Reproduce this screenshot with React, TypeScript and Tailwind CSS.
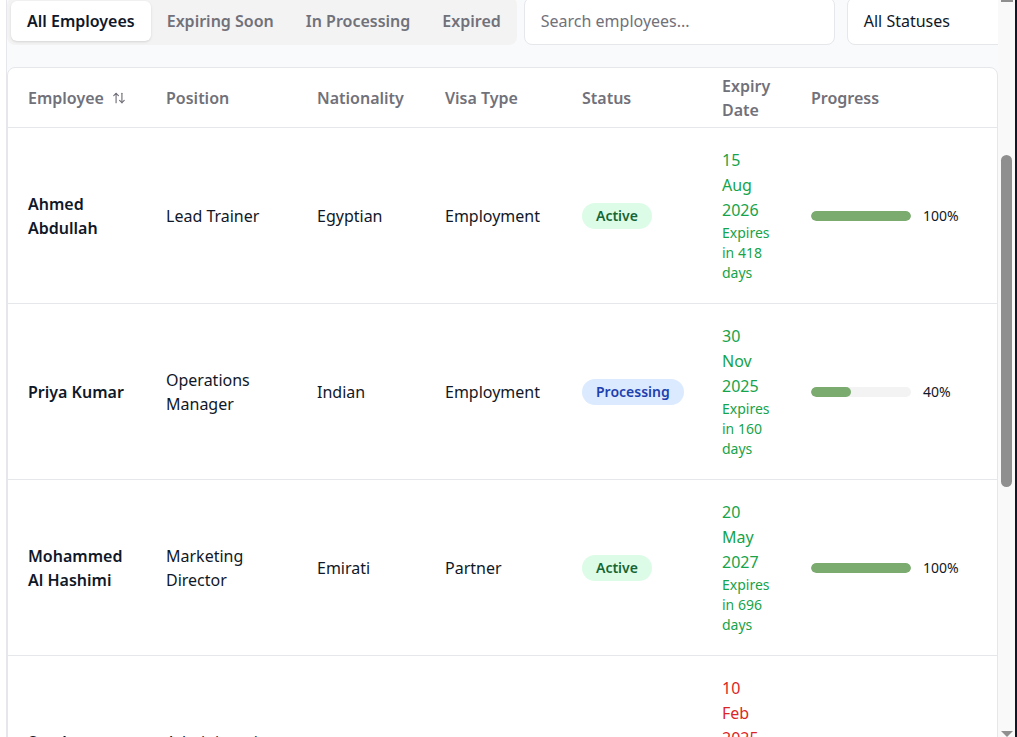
import React, { useEffect, useRef } from "react";
import { ArrowUpDown } from "lucide-react";

type Status = "Active" | "Processing" | "Expired";

type Employee = {
  name: string;
  position: string;
  nationality: string;
  visaType: string;
  status: Status;
  expiry: string;
  note: string;
  expired?: boolean;
  progress: number;
};

const employees: Employee[] = [
  {
    name: "Ahmed Abdullah",
    position: "Lead Trainer",
    nationality: "Egyptian",
    visaType: "Employment",
    status: "Active",
    expiry: "15 Aug 2026",
    note: "Expires in 418 days",
    progress: 100,
  },
  {
    name: "Priya Kumar",
    position: "Operations Manager",
    nationality: "Indian",
    visaType: "Employment",
    status: "Processing",
    expiry: "30 Nov 2025",
    note: "Expires in 160 days",
    progress: 40,
  },
  {
    name: "Mohammed Al Hashimi",
    position: "Marketing Director",
    nationality: "Emirati",
    visaType: "Partner",
    status: "Active",
    expiry: "20 May 2027",
    note: "Expires in 696 days",
    progress: 100,
  },
  {
    name: "Sarah Johnson",
    position: "Administrative Assistant",
    nationality: "British",
    visaType: "Employment",
    status: "Expired",
    expiry: "10 Feb 2025",
    note: "Expired 133 days ago",
    expired: true,
    progress: 0,
  },
  {
    name: "Fatima Hassan",
    position: "HR Specialist",
    nationality: "Jordanian",
    visaType: "Employment",
    status: "Active",
    expiry: "05 Jan 2027",
    note: "Expires in 561 days",
    progress: 100,
  },
  {
    name: "Daniel Costa",
    position: "Finance Analyst",
    nationality: "Portuguese",
    visaType: "Employment",
    status: "Processing",
    expiry: "12 Sep 2025",
    note: "Expires in 81 days",
    progress: 70,
  },
];

const badgeClass: Record<Status, string> = {
  Active: "bg-[#dcfce7] text-[#166534]",
  Processing: "bg-[#dbeafe] text-[#1e40af]",
  Expired: "bg-[#fee2e2] text-[#991b1b]",
};

const tabs = ["All Employees", "Expiring Soon", "In Processing", "Expired"];

const StatCard = ({ label, value }: { label: string; value: string }) => (
  <div className="flex flex-col gap-1 rounded-lg border border-gray-200 bg-white p-5">
    <span className="text-sm text-gray-500">{label}</span>
    <span className="text-2xl font-semibold text-gray-900">{value}</span>
  </div>
);

// classic scrollbar of the page, drawn since the screenshot browser hides real ones
const Scrollbar = () => (
  <div className="flex w-[17px] shrink-0 flex-col items-center bg-[#f9f9f9]">
    <div className="h-[2px] w-[12px] bg-[#8f8f8f]" />
    <div className="mt-[153px] h-[332px] w-[11px] rounded-full bg-[#8f8f8f]" />
    <div className="mt-auto h-0 w-0 border-x-[6px] border-t-[6px] border-x-transparent border-t-[#8f8f8f]" />
  </div>
);

export default function App() {
  const scrollRef = useRef<HTMLDivElement>(null);
  const toolbarRef = useRef<HTMLDivElement>(null);

  useEffect(() => {
    const box = scrollRef.current;
    const bar = toolbarRef.current;
    if (box && bar) {
      box.scrollTop = bar.offsetTop + 3;
    }
  }, []);

  return (
    <div
      className="flex h-[737px] w-[1017px] overflow-hidden bg-white text-gray-900"
      style={{ fontFamily: '"Segoe UI", "Noto Sans", sans-serif' }}
    >
      <div className="w-[7px] shrink-0 border-r border-gray-200 bg-white" />
      <div ref={scrollRef} className="relative flex-1 overflow-hidden bg-[#f9fafb]">
        <div className="flex h-[341px] flex-col gap-6 px-4 pt-6">
          <div className="flex flex-col gap-1">
            <h1 className="text-2xl font-semibold">Employee Visa Tracking</h1>
            <p className="text-base text-gray-500">
              Monitor visa status, renewals and expiry dates for all staff.
            </p>
          </div>
          <div className="grid grid-cols-4 gap-4">
            <StatCard label="Total Employees" value="24" />
            <StatCard label="Active Visas" value="18" />
            <StatCard label="In Processing" value="3" />
            <StatCard label="Expired" value="3" />
          </div>
        </div>

        <div ref={toolbarRef} className="flex items-center gap-[7px]">
          <div className="flex h-12 shrink-0 items-center rounded-lg bg-[#f3f3f3] py-1 pl-1">
            {tabs.map((t, i) => (
              <button
                key={t}
                className={
                  i === 0
                    ? "h-10 rounded-md bg-white px-4 text-base font-semibold text-gray-900 shadow-sm"
                    : "h-10 rounded-md px-4 text-base font-semibold text-[#71717a]"
                }
              >
                {t}
              </button>
            ))}
          </div>
          <div className="flex items-center gap-3">
            <input
              placeholder="Search employees..."
              className="h-12 w-[311px] shrink-0 rounded-lg border border-gray-200 bg-white px-4 text-base text-gray-900 outline-none placeholder:text-[#71717a]"
            />
            <div className="flex h-12 w-[190px] shrink-0 items-center rounded-lg border border-gray-200 bg-white px-4 text-base text-gray-900">
              All Statuses
            </div>
          </div>
        </div>

        <div className="mt-[22px] overflow-hidden rounded-lg border border-gray-200 bg-white">
          <table className="w-full table-fixed text-left">
            <thead>
              <tr className="border-b border-gray-200">
                <th className="w-[138px] px-5 py-[5.5px] text-base font-semibold text-[#71717a]">
                  <span className="inline-flex items-center gap-2">
                    Employee <ArrowUpDown size={14} strokeWidth={2} />
                  </span>
                </th>
                <th className="w-[151px] px-5 py-[5.5px] text-base font-semibold text-[#71717a]">Position</th>
                <th className="w-[128px] px-5 py-[5.5px] text-base font-semibold text-[#71717a]">Nationality</th>
                <th className="w-[137px] px-5 py-[5.5px] text-base font-semibold text-[#71717a]">Visa Type</th>
                <th className="w-[140px] px-5 py-[5.5px] text-base font-semibold text-[#71717a]">Status</th>
                <th className="w-[89px] px-5 py-[5.5px] text-base font-semibold text-[#71717a]">Expiry Date</th>
                <th className="px-5 py-[5.5px] text-base font-semibold text-[#71717a]">Progress</th>
              </tr>
            </thead>
            <tbody>
              {employees.map((e) => (
                <tr key={e.name} className="border-b border-gray-200">
                  <td className="px-5 py-5 text-base font-semibold text-gray-900">{e.name}</td>
                  <td className="px-5 py-5 text-base text-gray-900">{e.position}</td>
                  <td className="px-5 py-5 text-base text-gray-900">{e.nationality}</td>
                  <td className="px-5 py-5 text-base text-gray-900">{e.visaType}</td>
                  <td className="px-5 py-5">
                    <span
                      className={`inline-block rounded-full px-3.5 py-[3px] text-sm font-semibold ${badgeClass[e.status]}`}
                    >
                      {e.status}
                    </span>
                  </td>
                  <td className="px-5 py-5">
                    <div className={e.expired ? "text-[#dc2626]" : "text-[#16a34a]"}>
                      <div className="text-base leading-[25px]">{e.expiry}</div>
                      <div className="text-sm">{e.note}</div>
                    </div>
                  </td>
                  <td className="px-5 py-5">
                    <div className="flex items-center gap-3">
                      <div className="h-2.5 w-[100px] overflow-hidden rounded-full bg-[#f3f3f3]">
                        <div
                          className="h-full rounded-full bg-[#7cab70]"
                          style={{ width: `${e.progress}%` }}
                        />
                      </div>
                      <span className="text-sm text-gray-900">{e.progress}%</span>
                    </div>
                  </td>
                </tr>
              ))}
            </tbody>
          </table>
          <div className="flex items-center justify-between px-5 py-3 text-sm text-gray-500">
            <span>Showing 1-6 of 24 employees</span>
            <div className="flex gap-2">
              <button className="h-9 rounded-md border border-gray-200 px-3 text-gray-700">Previous</button>
              <button className="h-9 rounded-md border border-gray-200 px-3 text-gray-700">Next</button>
            </div>
          </div>
        </div>
        <div className="h-12" />
      </div>
      <Scrollbar />
      <div className="w-[2px] shrink-0 bg-[#0f172a]" />
    </div>
  );
}
